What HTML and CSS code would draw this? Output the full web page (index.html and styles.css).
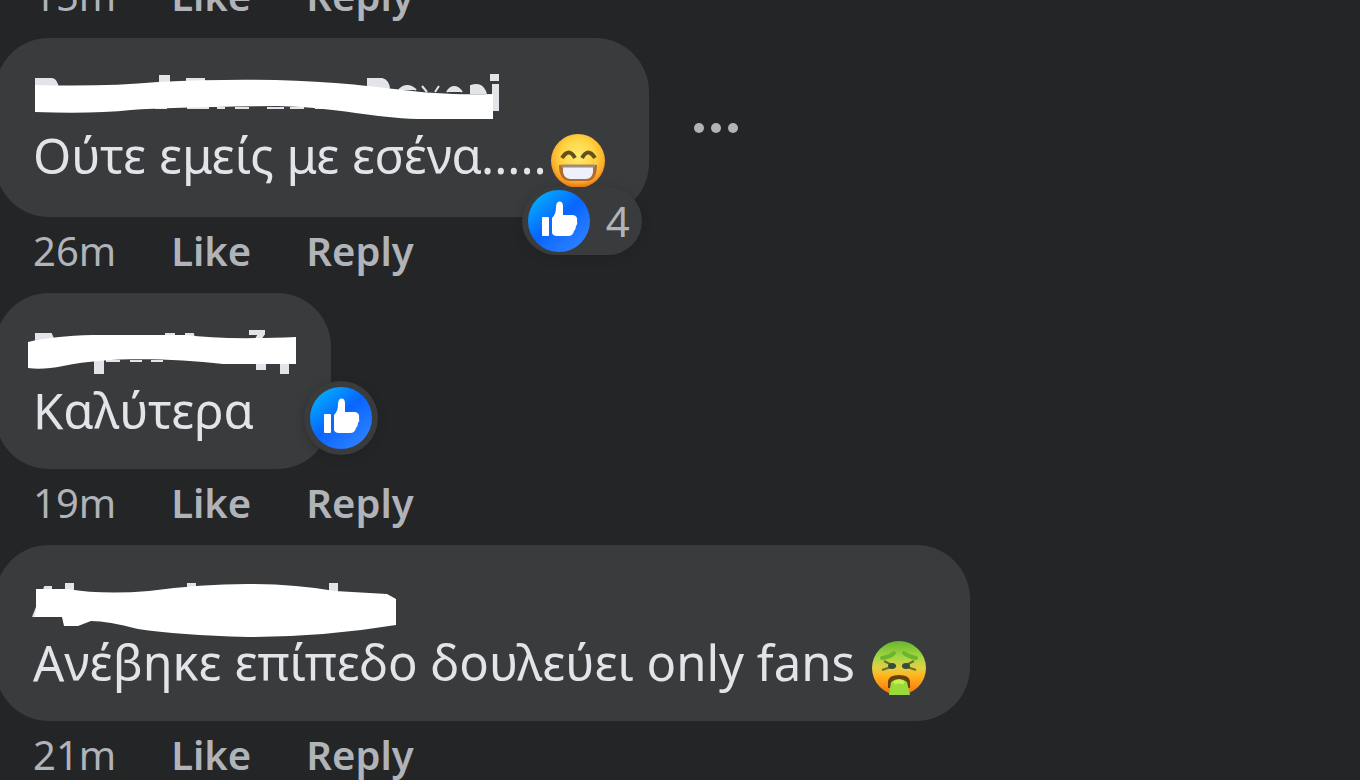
FILE: index.html
```html
<!DOCTYPE html>
<html lang="en">
<head>
<meta charset="utf-8">
<meta name="viewport" content="width=device-width, initial-scale=1">
<title>Comments</title>
<link rel="stylesheet" href="styles.css">
</head>
<body>
<svg class="defs" aria-hidden="true">
  <defs>
    <linearGradient id="blue" x1="0.1" y1="0.1" x2="0.8" y2="0.9">
      <stop offset="0" stop-color="#02adfc"/><stop offset="0.5" stop-color="#0866ff"/><stop offset="1" stop-color="#2b7eff"/>
    </linearGradient>
    <radialGradient id="yellow" cx="0.5" cy="0.4" r="0.6">
      <stop offset="0" stop-color="#ffec70"/><stop offset="0.55" stop-color="#ffd23f"/><stop offset="0.8" stop-color="#fbb02c"/><stop offset="1" stop-color="#f47a12"/>
    </radialGradient>
    <linearGradient id="sick" x1="0" y1="0" x2="0" y2="1">
      <stop offset="0" stop-color="#68b52c"/><stop offset="0.3" stop-color="#a5d744"/><stop offset="0.5" stop-color="#e3cf42"/><stop offset="0.65" stop-color="#ffb31d"/><stop offset="1" stop-color="#f36f0b"/>
    </linearGradient>
    <symbol id="thumb" viewBox="0 0 62 62">
      <circle cx="31" cy="31" r="31" fill="url(#blue)"/>
      <rect x="14" y="27" width="7" height="19" rx="1" fill="#fff"/>
      <path d="M24 28 C27 25 28 22 28 17 C28 10 35 10 35 16 V25 H45 Q50 26 49 31 Q50 34 48 36 Q48 39 46 41 Q45 46 40 46 H29 Q25 46 24 43 Z" fill="#fff"/>
    </symbol>
  </defs>
</svg>
<main class="thread">
  <article class="comment">
    <footer class="actions"><time>15m</time><button>Like</button><button>Reply</button></footer>
  </article>

  <article class="comment">
    <div class="row">
      <div class="bubble popular">
        <svg class="name" width="466" height="60" viewBox="0 0 466 60" role="img" aria-label="Hidden name">
          <path class="mark" d="M3 37 V17 H19 Q24 18 25 27 M127 14 h9 v9 h-9z M154 23 V17 H171 V23 M335 28 V17 H349 Q356 19 356 28 M366 28 Q374 20 383 28 M389 24 L394 30 M406 24 L402 30 M414 30 Q421 20 429 30 M438 32 V24 Q449 20 453 32 M458 13 h7 v5 h-7z M460 23 h5 v25 h-5z M98 46 h15 M122 46 h12 M154 46 h22 M184 46 h8 M202 46 h14 M234 46 h17 M257 46 h14 M282 46 h14"/>
          <path class="ink" d="M2 23 Q70 25 125 20 Q225 15 302 21 C360 25 390 34 460 32 V57 H385 C340 56 310 46 245 44 Q140 45 98 48 Q60 52 2 50 Z"/>
        </svg>
        <p class="text">Ούτε εμείς με εσένα.....<svg class="emoji" viewBox="0 0 54 54" role="img" aria-label="Grinning face">
          <circle cx="27" cy="27" r="27" fill="url(#yellow)"/>
          <path d="M11 24 Q18 13 24 24 M31 24 Q37 13 44 24" fill="none" stroke="#65501f" stroke-width="4"/>
          <path d="M8 31 H46 Q46 47 36 47 H18 Q8 46 8 31Z" fill="#b06c2c"/>
          <path d="M12 32 H42 V38 Q41 45 35 45 H19 Q13 44 12 38Z" fill="#eef0fb"/>
          <path d="M10 32 H44" stroke="#a28a78" stroke-width="3"/>
        </svg></p>
        <div class="reaction counted"><svg class="thumb" role="img" aria-label="Like"><use href="#thumb"/></svg><span>4</span></div>
      </div>
      <button class="more" aria-label="More options"><svg viewBox="0 0 46 12" width="46" height="12"><circle cx="6" cy="6" r="5"/><circle cx="23" cy="6" r="5"/><circle cx="40" cy="6" r="5"/></svg></button>
    </div>
    <footer class="actions"><time>26m</time><button>Like</button><button>Reply</button></footer>
  </article>

  <article class="comment">
    <div class="row">
      <div class="bubble">
        <svg class="name" width="254" height="60" viewBox="0 0 254 60" role="img" aria-label="Hidden name">
          <path class="mark" d="M3 28 V17 H18 L21 24 M133 23 V17 h8 v8 M153 23 V17 h7 l2 8 M217 14 H231 V17 L226 24 L223 22 L226 17 H217z M62 44 h8 v12 h-8z M73 44 h14 M97 44 h12 M118 44 h12 M224 48 h8 v4 h-8z M248 46 h7 v10 h-7z"/>
          <path class="ink" d="M-5 25 Q20 19 60 18 H152 Q190 23 263 20 V47 H190 C140 42 80 39 30 49 Q10 53 -5 51 Z"/>
        </svg>
        <p class="text">Καλύτερα</p>
        <div class="reaction"><svg class="thumb" role="img" aria-label="Like"><use href="#thumb"/></svg></div>
      </div>
    </div>
    <footer class="actions"><time>19m</time><button>Like</button><button>Reply</button></footer>
  </article>

  <article class="comment">
    <div class="row">
      <div class="bubble">
        <svg class="name" width="364" height="60" viewBox="0 0 364 60" role="img" aria-label="Hidden name">
          <path class="mark" d="M0 48 L12 18 H18 V24 M33 15 h7 v9 h-7z M155 15 h7 v7 h-7z M297 15 h7 v9 h-7z"/>
          <path class="ink" d="M3 20 H34 Q70 26 116 22 Q220 8 302 22 L354 25 L363 30 V56 Q290 68 215 68 Q145 66 105 60 Q75 52 58 52 L45 57 H31 L29 48 H1 L3 42 Z"/>
        </svg>
        <p class="text">Ανέβηκε επίπεδο δουλεύει only fans <svg class="emoji" viewBox="0 0 54 54" role="img" aria-label="Vomiting face">
          <circle cx="27" cy="27" r="27" fill="url(#sick)"/>
          <path d="M10 17 Q18 16 22 12 M32 12 Q37 16 44 17" fill="none" stroke="#6bb52a" stroke-width="4" stroke-linecap="round"/>
          <path d="M12 20 L22 25 L10 29 M42 20 L32 25 L44 29" fill="none" stroke="#6b6d2c" stroke-width="2"/>
          <ellipse cx="20" cy="25" rx="4" ry="3" fill="#384b40"/><ellipse cx="34" cy="25" rx="4" ry="3" fill="#384b40"/>
          <path d="M16 47 V40 Q17 34 27 34 Q37 34 38 40 V47" fill="#66400b"/>
          <path d="M17 54 L19 41 Q27 35 35 41 L38 54Z" fill="#9adb3c"/>
          <path d="M22 42 Q27 39 32 42" fill="none" stroke="#c6f052" stroke-width="4"/>
        </svg></p>
      </div>
    </div>
    <footer class="actions"><time>21m</time><button>Like</button><button>Reply</button></footer>
  </article>
</main>
</body>
</html>
```
FILE: styles.css
```css
* { box-sizing: border-box; }

body {
  margin: 0;
  height: 100vh;
  overflow: hidden;
  background: #242527;
  color: #e2e4e9;
  font-family: "Noto Sans", "Open Sans", sans-serif;
}

.defs {
  position: absolute;
  width: 0;
  height: 0;
}

.thread {
  display: flex;
  flex-direction: column;
  margin: -38px 0 0 -5px;
}

.row {
  display: flex;
  align-items: center;
  gap: 44px;
}

.bubble {
  position: relative;
  padding: 24px 44px 26px 38px;
  border-radius: 54px;
  background: #3a3b3c;
}

.popular { padding-bottom: 29px; }

.name {
  display: block;
  overflow: visible;
}

.mark {
  fill: #e2e4e9;
  stroke: #e2e4e9;
  stroke-width: 2;
}

.ink { fill: #fff; }

.text {
  margin: 0;
  font-size: 49px;
  line-height: 66px;
  white-space: nowrap;
}

.emoji {
  display: inline-block;
  width: 54px;
  height: 54px;
  margin-left: 4px;
  vertical-align: -14px;
}

.reaction {
  position: absolute;
  right: -47px;
  bottom: 14px;
  display: flex;
  align-items: center;
  gap: 16px;
  padding: 6px;
  border-radius: 37px;
  background: #3a3b3c;
  box-shadow: 0 3px 8px #1c1d1f66;
  color: #b0b3b8;
  font-size: 42px;
  line-height: 58px;
}

.counted {
  right: 7px;
  bottom: -38px;
  padding: 3px 12px 3px 6px;
}

.thumb {
  display: block;
  width: 62px;
  height: 62px;
}

button {
  padding: 0;
  border: 0;
  background: none;
  color: inherit;
  font: inherit;
  cursor: pointer;
}

.more svg {
  display: block;
  fill: #b0b3b8;
}

.actions {
  display: flex;
  align-items: baseline;
  gap: 55px;
  height: 76px;
  padding: 4px 38px 0;
  color: #b0b3b8;
  font-size: 40px;
  line-height: 60px;
}

.actions button { font-weight: 600; }
```
